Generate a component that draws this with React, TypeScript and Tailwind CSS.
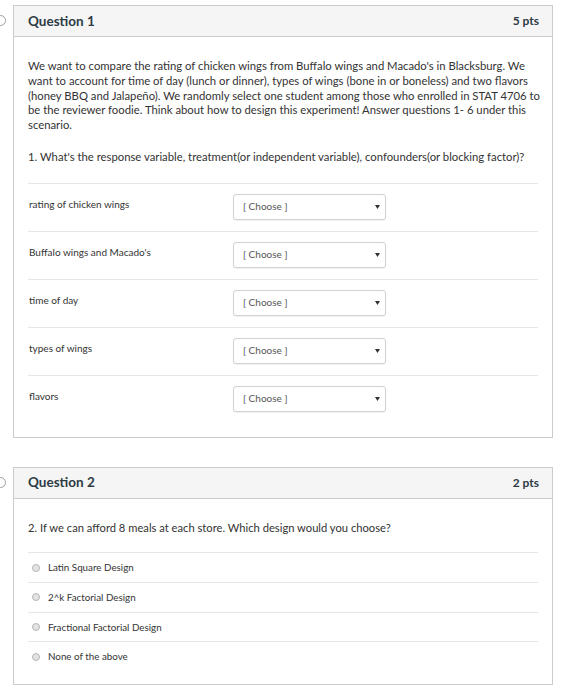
import React from 'react'

const rows = [
  'rating of chicken wings',
  "Buffalo wings and Macado's",
  'time of day',
  'types of wings',
  'flavors',
]

const options = [
  'Latin Square Design',
  '2^k Factorial Design',
  'Fractional Factorial Design',
  'None of the above',
]

function QuestionHeader({ title, points }: { title: string; points: string }) {
  return (
    <div className="relative flex h-[31px] items-center justify-between border-b border-[#c7cdd1] bg-[#f5f5f5] pl-[14px] pr-[13px]">
      <span className="absolute left-[-19px] top-[9px] h-[11px] w-[11px] rounded-full border border-[#9aa0a5] bg-white" />
      <h2 className="text-[13.5px] font-bold text-[#2d3b45]">{title}</h2>
      <span className="text-[12px] font-bold text-[#2d3b45]">{points}</span>
    </div>
  )
}

function ChooseSelect() {
  return (
    <div className="flex h-[26px] w-[153px] items-center justify-between rounded-[3px] border border-[#cfd3d6] bg-white pl-[9px] pr-[5px] shadow-[0_1px_1px_rgba(0,0,0,0.06)]">
      <span className="text-[10px] text-[#555]">[ Choose ]</span>
      <svg width="5" height="4" viewBox="0 0 5 4">
        <path d="M0 0h5L2.5 4z" fill="#333" />
      </svg>
    </div>
  )
}

export default function App() {
  return (
    <div className="min-h-[700px] bg-white pl-[13px] pt-[5px] text-[#2d3b45]" style={{ fontFamily: 'Lato, "Open Sans", sans-serif' }}>
      {/* Question 1 */}
      <div className="w-[540px] border border-[#c7cdd1]">
        <QuestionHeader title="Question 1" points="5 pts" />
        <div className="px-[14px] pb-[14px] pt-[22px]">
          <p className="mr-[-6px] text-[11.3px] leading-[14.75px] text-[#333]">
            We want to compare the rating of chicken wings from Buffalo wings and Macado's in Blacksburg. We
            want to account for time of day (lunch or dinner), types of wings (bone in or boneless) and two flavors
            (honey BBQ and Jalapeño). We randomly select one student among those who enrolled in STAT 4706 to
            be the reviewer foodie. Think about how to design this experiment! Answer questions 1- 6 under this
            scenario.
          </p>
          <p className="mt-[17px] text-[11.3px] leading-[14.75px] text-[#333]">
            1. What's the response variable, treatment(or independent variable), confounders(or blocking factor)?
          </p>
          <div className="mt-[18px]">
            {rows.map(label => (
              <div key={label} className="flex h-[48px] items-start border-t border-[#e6e6e6] pt-[10px]">
                <div className="w-[205px] pl-[1px] pt-[3px] text-[10px] text-[#333]">{label}</div>
                <ChooseSelect />
              </div>
            ))}
          </div>
        </div>
      </div>

      {/* Question 2 */}
      <div className="mt-[29px] w-[540px] border border-[#c7cdd1]">
        <QuestionHeader title="Question 2" points="2 pts" />
        <div className="px-[14px] pb-[13px] pt-[22px]">
          <p className="text-[11.2px] leading-[14.75px] text-[#333]">
            2. If we can afford 8 meals at each store. Which design would you choose?
          </p>
          <div className="mt-[17px]">
            {options.map(opt => (
              <div key={opt} className="flex h-[29.7px] items-center border-t border-[#e6e6e6] pl-[4px]">
                <span className="h-[8px] w-[8px] rounded-full border border-[#b5b5b5] bg-[#e4e4e4]" />
                <span className="ml-[8px] text-[9.8px] text-[#333]">{opt}</span>
              </div>
            ))}
          </div>
        </div>
      </div>
    </div>
  )
}
